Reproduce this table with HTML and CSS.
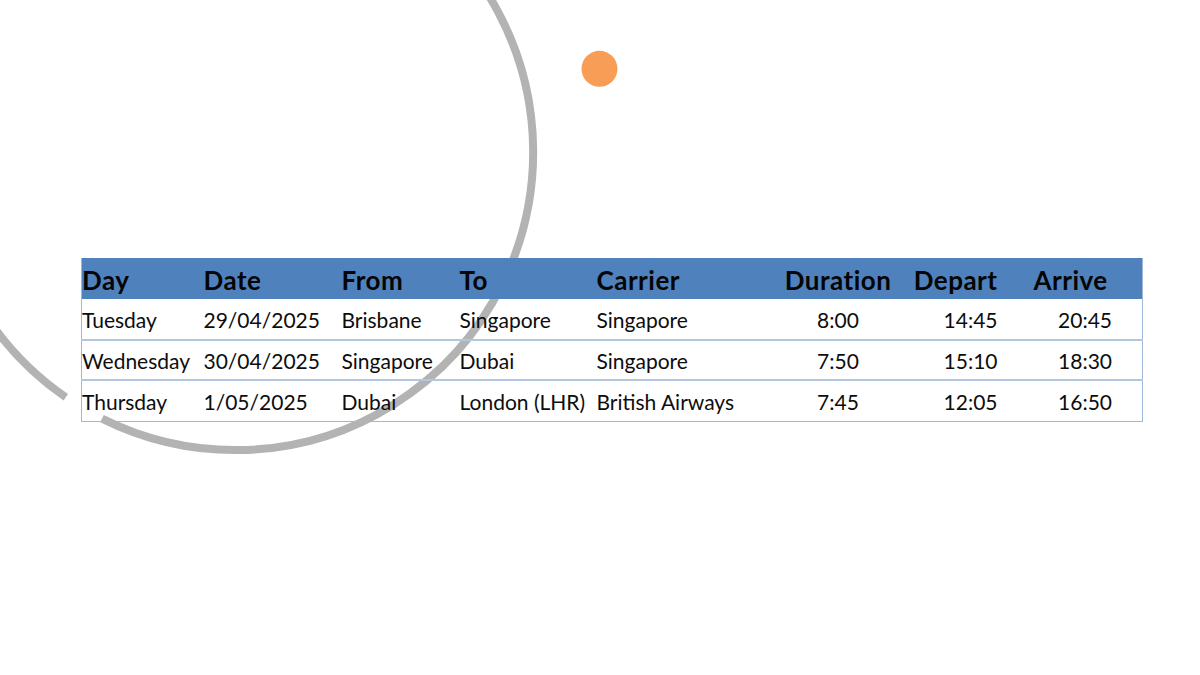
FILE: index.html
```html
<!DOCTYPE html>
<html lang="en">
<head>
<meta charset="utf-8">
<title>Itinerary</title>
<link rel="stylesheet" href="styles.css">
</head>
<body>
<div class="slide">
  <svg class="decor" width="1200" height="675" viewBox="0 0 1200 675" aria-hidden="true">
    <path class="ring" d="M 65.8 397.3 A 298 298 0 1 1 102.0 418.7"/>
    <circle class="dot" cx="599.5" cy="68.8" r="18"/>
  </svg>
  <table class="flights">
    <colgroup>
      <col class="c-day"><col class="c-date"><col class="c-from"><col class="c-to">
      <col class="c-carrier"><col class="c-dur"><col class="c-dep"><col class="c-arr">
    </colgroup>
    <thead>
      <tr>
        <th>Day</th><th>Date</th><th>From</th><th>To</th><th>Carrier</th>
        <th class="dur">Duration</th><th class="dep">Depart</th><th class="arr-h">Arrive</th>
      </tr>
    </thead>
    <tbody>
      <tr>
        <td>Tuesday</td><td>29/04/2025</td><td>Brisbane</td><td>Singapore</td><td>Singapore</td>
        <td class="dur">8:00</td><td class="dep">14:45</td><td class="arr">20:45</td>
      </tr>
      <tr>
        <td>Wednesday</td><td>30/04/2025</td><td>Singapore</td><td>Dubai</td><td>Singapore</td>
        <td class="dur">7:50</td><td class="dep">15:10</td><td class="arr">18:30</td>
      </tr>
      <tr>
        <td>Thursday</td><td>1/05/2025</td><td>Dubai</td><td>London (LHR)</td><td>British Airways</td>
        <td class="dur">7:45</td><td class="dep">12:05</td><td class="arr">16:50</td>
      </tr>
    </tbody>
  </table>
</div>
</body>
</html>
```
FILE: styles.css
```css
html, body {
  margin: 0;
  padding: 0;
  background: #ffffff;
}

.slide {
  position: relative;
  width: 1200px;
  height: 675px;
  box-sizing: border-box;
  padding: 258px 0 0 81px;
  overflow: hidden;
  font-family: Lato, "Open Sans", sans-serif;
  color: #0d0d0d;
}

.decor {
  position: absolute;
  left: 0;
  top: 0;
  z-index: 0;
}

.ring {
  fill: none;
  stroke: #b3b3b3;
  stroke-width: 8;
}

.dot {
  fill: #f89d55;
}

.flights {
  position: relative;
  z-index: 1;
  width: 1061px;
  table-layout: fixed;
  border-collapse: collapse;
  border-left: 1px solid #9fb8da;
  border-right: 1px solid #9fb8da;
}

.c-day { width: 122px; }
.c-date { width: 138px; }
.c-from { width: 118px; }
.c-to { width: 137px; }
.c-carrier { width: 174px; }
.c-dur { width: 135px; }
.c-dep { width: 95px; }
.c-arr { width: 142px; }

.flights th {
  background: #4f81bd;
  height: 41px;
  box-sizing: border-box;
  padding: 3px 0 0 0;
  text-align: left;
  vertical-align: middle;
  font-size: 26px;
  font-weight: 700;
  letter-spacing: 0.5px;
  line-height: 31px;
  white-space: nowrap;
  color: #050505;
}

.flights td {
  height: 40.7px;
  box-sizing: border-box;
  padding: 1px 0 0 0;
  vertical-align: middle;
  font-size: 21px;
  line-height: 25px;
  white-space: nowrap;
  border-bottom: 2px solid #b2c6e2;
}

.flights tbody tr:last-child td {
  border-bottom: 1px solid #9fb8da;
}

.flights .dur {
  text-align: center;
}

.flights .dep {
  text-align: right;
  padding-right: 3px;
}

.flights .arr-h {
  padding-left: 33px;
}

.flights .arr {
  text-align: right;
  padding-right: 30px;
}
```
